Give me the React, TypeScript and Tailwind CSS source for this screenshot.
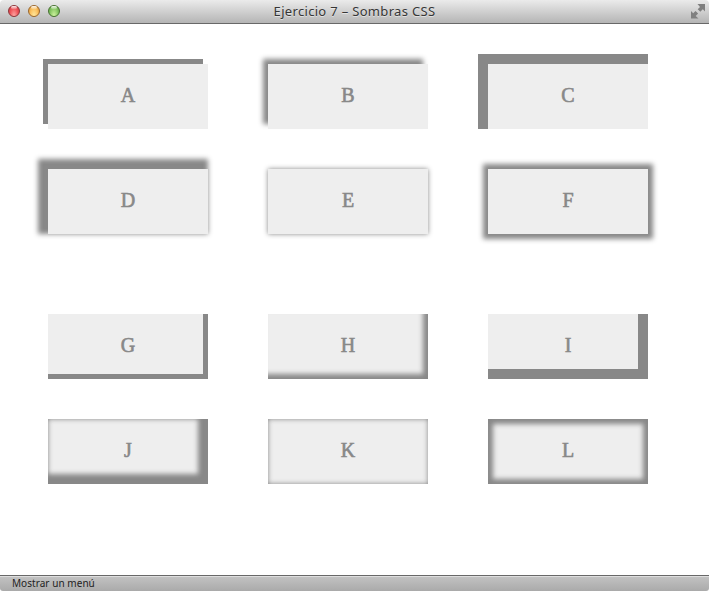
import React from 'react';

interface Box {
  label: string;
  shadow: string;
}

const outer: Box[] = [
  { label: 'A', shadow: 'shadow-[-5px_-5px_0_#888]' },
  { label: 'B', shadow: 'shadow-[-5px_-5px_5px_#888]' },
  { label: 'C', shadow: 'shadow-[-5px_-5px_0_5px_#888]' },
  { label: 'D', shadow: 'shadow-[-5px_-5px_5px_5px_#888]' },
  { label: 'E', shadow: 'shadow-[0_0_5px_#888]' },
  { label: 'F', shadow: 'shadow-[0_0_5px_5px_#888]' },
];

const inner: Box[] = [
  { label: 'G', shadow: 'shadow-[inset_-5px_-5px_0_#888]' },
  { label: 'H', shadow: 'shadow-[inset_-5px_-5px_5px_#888]' },
  { label: 'I', shadow: 'shadow-[inset_-5px_-5px_0_5px_#888]' },
  { label: 'J', shadow: 'shadow-[inset_-5px_-5px_5px_5px_#888]' },
  { label: 'K', shadow: 'shadow-[inset_0_0_5px_#888]' },
  { label: 'L', shadow: 'shadow-[inset_0_0_5px_5px_#888]' },
];

function Group({ boxes }: { boxes: Box[] }) {
  return (
    <div className="grid grid-cols-[160px_160px_160px] gap-x-[60px] gap-y-10">
      {boxes.map((b) => (
        <div
          key={b.label}
          className={`flex h-[65px] items-center justify-center bg-[#eee] pb-[3px] font-['Liberation_Serif',serif] text-[20px] leading-none text-[#888] [-webkit-text-stroke:0.6px_#888] ${b.shadow}`}
        >
          {b.label}
        </div>
      ))}
    </div>
  );
}

const lights = [
  'border-[#8c3438] bg-[radial-gradient(ellipse_at_50%_100%,#ffaaa6_0%,#f0575c_55%,#dc444b_80%,#a9363b_100%)]',
  'border-[#9a662a] bg-[radial-gradient(ellipse_at_50%_100%,#ffeaa0_0%,#fac160_55%,#e9a648_80%,#b77b35_100%)]',
  'border-[#45702f] bg-[radial-gradient(ellipse_at_50%_100%,#d2f5a2_0%,#8cc967_55%,#6fb452_80%,#4c8038_100%)]',
];

export default function App() {
  return (
    <div className="flex h-[591px] w-[709px] flex-col overflow-hidden bg-white">
      <header className="relative flex h-6 shrink-0 items-center justify-between rounded-t-[4px] border-b border-[#686868] bg-gradient-to-b from-[#ebebeb] to-[#b5b5b5] pr-[3px] pl-2">
        <div className="flex gap-2 pb-px">
          {lights.map((c) => (
            <div key={c} className={`relative h-3 w-3 rounded-full border ${c}`}>
              <span className="absolute top-0 left-[2px] h-[3px] w-[6px] rounded-full bg-gradient-to-b from-white/90 to-white/20" />
            </div>
          ))}
        </div>
        <h1 className="absolute inset-x-0 top-[2px] text-center font-['Noto_Sans',sans-serif] text-[13px] leading-[19px] tracking-[0.32px] whitespace-nowrap text-[#363636] [text-shadow:0_1px_0_#ffffff80]">
          Ejercicio 7 – Sombras CSS
        </h1>
        <svg className="h-[15px] w-[15px]" viewBox="0 0 15 15" fill="#808080">
          <path d="M6.500 0H14v7.500l-2.200-2.200-2.500 2.500-2.600-2.600 2.300-2.300z" />
          <path d="M0 7l2.200 2.200 2.300-2.300 2.600 2.600-2.400 2.400L7.500 14.500H0z" />
        </svg>
      </header>
      <main className="flex flex-1 flex-col gap-20 pt-10 pl-12">
        <Group boxes={outer} />
        <Group boxes={inner} />
      </main>
      <footer className="flex h-4 shrink-0 items-center rounded-b-[3px] border-t border-[#686868] bg-gradient-to-b from-[#c3c3c3] to-[#aaa] pb-[2px] pl-3 font-['Noto_Sans',sans-serif] text-[10px] leading-none tracking-[0.05px] text-[#222] shadow-[inset_0_1px_0_#dedede]">
        Mostrar un menú
      </footer>
    </div>
  );
}
